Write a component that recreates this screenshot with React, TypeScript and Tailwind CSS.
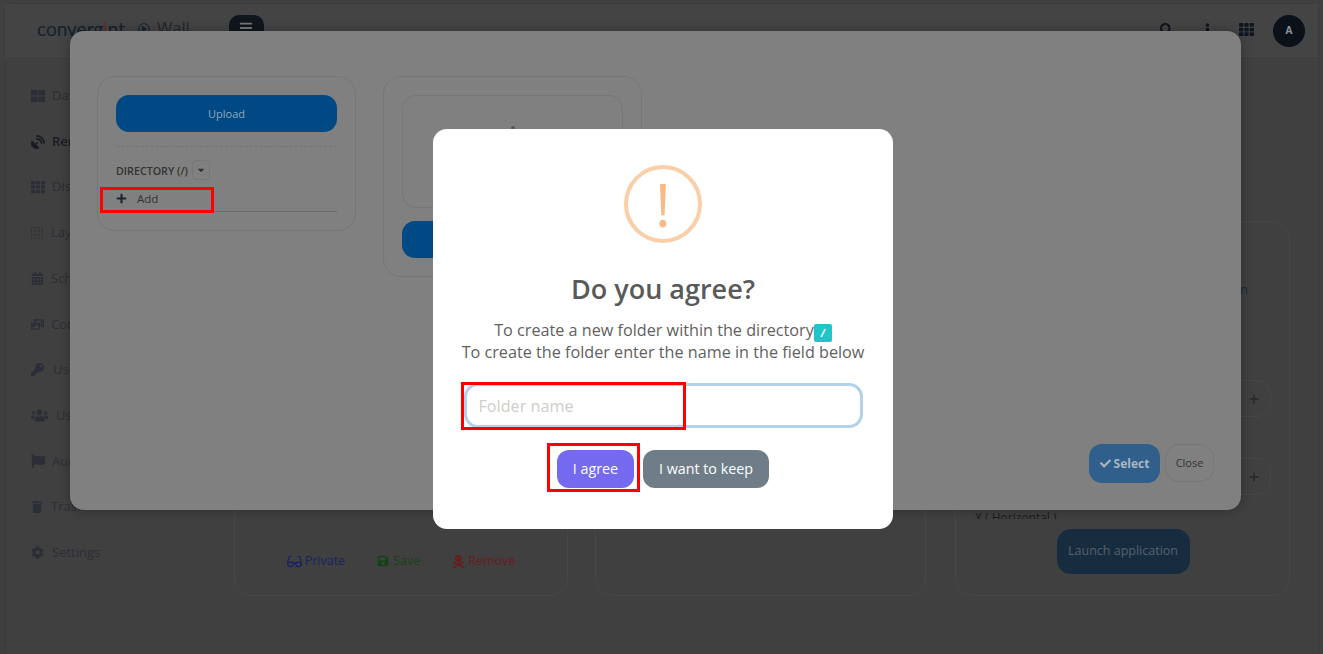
import {
  FaBars,
  FaCalendarAlt,
  FaCaretDown,
  FaCheck,
  FaCog,
  FaEllipsisV,
  FaFlag,
  FaGlasses,
  FaKey,
  FaPhotoVideo,
  FaPlus,
  FaRegPlayCircle,
  FaSatelliteDish,
  FaSave,
  FaSearch,
  FaSkullCrossbones,
  FaTh,
  FaThLarge,
  FaTrash,
  FaUsers,
} from "react-icons/fa";

function DottedGrid({ size = 12 }: { size?: number }) {
  return (
    <svg width={size} height={size} viewBox="0 0 12 12" fill="none" stroke="currentColor" strokeWidth="1" aria-hidden="true">
      <rect x="0.5" y="0.5" width="11" height="11" strokeDasharray="1 1" />
      <path d="M4 0v12M8 0v12M0 4h12M0 8h12" strokeDasharray="1 1" />
    </svg>
  );
}

const sideItems = [
  { label: "Dashboard", icon: FaThLarge, size: 14, gap: "gap-[7px]" },
  { label: "Renderers", icon: FaSatelliteDish, size: 14, gap: "gap-[7px]", active: true },
  { label: "Displays", icon: FaTh, size: 14, gap: "gap-[7px]" },
  { label: "Layouts", icon: DottedGrid, size: 12, gap: "gap-[8px]" },
  { label: "Schedules", icon: FaCalendarAlt, size: 13, gap: "gap-[7px]" },
  { label: "Contents", icon: FaPhotoVideo, size: 13, gap: "gap-[7px]" },
  { label: "Users", icon: FaKey, size: 13, gap: "gap-[9px]" },
  { label: "Usergroups", icon: FaUsers, size: 17, gap: "gap-[8px]" },
  { label: "Audit", icon: FaFlag, size: 14, gap: "gap-[7px]" },
  { label: "Trash", icon: FaTrash, size: 12, gap: "gap-[8px]" },
  { label: "Settings", icon: FaCog, size: 13, gap: "gap-[8px]" },
];

function Stepper() {
  return (
    <div className="flex h-[37px] items-center justify-end rounded-[14px] border border-[#474747] pr-[11px] text-[#2b2b2b]">
      <FaPlus size={10} />
    </div>
  );
}

export default function App() {
  return (
    <div className="relative h-[654px] w-[1323px] overflow-hidden bg-[#404040] font-['Open_Sans',sans-serif]">
      {/* page under the dialogs */}
      <div className="ml-[4px] mr-[4px] mt-[3px] h-[651px] rounded-t-[10px] border-x border-t border-[#3a3a3a]">
        <header className="flex h-[53px] items-center border-b border-[#474747] bg-[#444444] pl-[32px] pr-[13px] pt-[1px]">
          <span className="mb-[4px] w-[96px] font-['Lato',sans-serif] text-[19px] leading-none text-[#14222e]">
            converg<span className="text-[#6e2a2a]">i</span>nt
          </span>
          <FaRegPlayCircle size={12} className="mb-[4px] ml-[5px] text-[#1d2530]" />
          <span className="mb-[4px] ml-[7px] text-[16.5px] text-[#23272e]">Wall</span>
          <div className="ml-[39px] flex h-[32px] w-[35px] justify-center rounded-[10px] bg-[#10161e] pt-[6px] text-[#777]">
            <FaBars size={14} />
          </div>
          <div className="ml-auto flex items-center text-[#10161e]">
            <FaSearch size={13} className="mb-[3px] mr-[28px]" />
            <FaEllipsisV size={13} className="mb-[3px] mr-[25px]" />
            <FaTh size={15} className="mb-[3px] mr-[19px]" />
            <div className="flex h-[32px] w-[32px] items-center justify-center rounded-full bg-[#0a1118] text-[10px] font-bold text-[#8b95a0]">
              A
            </div>
          </div>
        </header>
        <div className="flex">
          <aside className="w-[229px] shrink-0 pl-[26px] pt-[16px]">
            {sideItems.map((item) => (
              <div
                key={item.label}
                className={`flex h-[45.7px] items-center ${item.gap} text-[13px] ${
                  item.active ? "font-semibold text-[#181b22]" : "text-[#2b2e36]"
                }`}
              >
                <item.icon size={item.size} />
                <span>{item.label}</span>
              </div>
            ))}
          </aside>
          <main className="grid flex-1 grid-cols-[334px_333px_335px] gap-x-[27px] pt-[164px]">
            <section className="flex h-[375px] flex-col justify-end rounded-[18px] border border-[#474747] pb-[24px]">
              <div className="flex h-5 items-center justify-center gap-[32px] text-[12.5px]">
                <span className="flex items-center gap-[3px] text-[#1c2260]">
                  <FaGlasses size={15} />
                  Private
                </span>
                <span className="flex items-center gap-[4px] text-[#174217]">
                  <FaSave size={12} />
                  Save
                </span>
                <span className="flex items-center gap-[3px] text-[#6a1c1c]">
                  <FaSkullCrossbones size={13} />
                  Remove
                </span>
              </div>
            </section>
            <section className="h-[375px] w-[331px] rounded-[18px] border border-[#474747]" />
            <section className="flex h-[375px] flex-col rounded-[18px] border border-[#474747] pl-[19px] pr-[18px]">
              <p className="mt-[58px] h-5 pr-[23px] text-right text-[13px] text-[#1c2c3c]">Position</p>
              <div className="mt-[80px]">
                <Stepper />
              </div>
              <div className="mt-[41px]">
                <Stepper />
              </div>
              <p className="mt-[15px] h-[9px] overflow-hidden text-[12px] leading-[16px] text-[#1c1c1c]">X ( Horizontal )</p>
              <button className="mx-auto mt-[10px] h-[45px] w-[133px] rounded-[14px] bg-[#182c40] text-[12.5px] font-medium text-[#55606b]">
                Launch application
              </button>
            </section>
          </main>
        </div>
      </div>

      {/* file picker modal */}
      <div className="absolute left-[70px] top-[31px] flex h-[479px] w-[1171px] flex-col justify-between rounded-[14px] bg-[#808080] shadow-[0_0_12px_rgba(0,0,0,0.3)]">
        <div className="flex gap-[27px] pl-[27px] pt-[45px]">
          <div className="h-[155px] w-[259px] rounded-[18px] border border-[#767676] px-[18px] pt-[18px]">
            <div className="flex h-[37px] items-center justify-center rounded-[13px] bg-[#004985] pt-[1px] text-[11px] text-[#8fa9bd]">
              Upload
            </div>
            <div className="mt-[14px] border-t border-dashed border-[#737373]" />
            <div className="mt-[13px] flex items-center gap-[4px]">
              <span className="pt-[2px] text-[10.7px] font-semibold text-[#333]">DIRECTORY (/)</span>
              <span className="flex h-[20px] w-[18px] items-center justify-center rounded-[4px] border border-[#777] text-[#333]">
                <FaCaretDown size={10} />
              </span>
            </div>
            <div className="mt-[6px] flex h-[26px] items-center gap-[10px] border-b border-[#6c6c6c] text-[11.5px] text-[#333]">
              <FaPlus size={11} className="text-[#1b2430]" />
              Add
            </div>
          </div>
          <div className="h-[201px] w-[259px] rounded-[18px] border border-[#767676] px-[18px] pt-[18px]">
            <div className="flex h-[113px] justify-center rounded-[14px] border border-[#767676] pt-[30px]">
              <div className="h-[4px] w-[4px] rounded-full bg-[#555555]" />
            </div>
            <div className="mt-[13px] h-[37px] rounded-[13px] bg-[#004985]" />
          </div>
        </div>
        <div className="flex justify-end gap-[5px] pb-[27px] pr-[27px]">
          <button className="flex h-[39px] w-[71px] items-center justify-center gap-[3px] rounded-[13px] bg-[#2f5f8a] text-[12px] font-bold text-[#a9b6c2]">
            <FaCheck size={11} />
            Select
          </button>
          <button className="h-[38px] w-[49px] rounded-[14px] border border-[#767676] text-[11px] text-[#333]">
            Close
          </button>
        </div>
      </div>

      {/* confirm dialog */}
      <div className="absolute left-[433px] top-[129px] flex h-[400px] w-[460px] flex-col items-center rounded-[14px] bg-white pt-[36px] text-[#5f5f5f]">
        <div className="flex h-[78px] w-[78px] items-center justify-center rounded-full border-4 border-[#facea8] text-[60px] leading-none text-[#f8bb86]">
          !
        </div>
        <h2 className="mt-[30px] text-[27px] font-semibold leading-[32px] text-[#595959]">Do you agree?</h2>
        <p className="mt-[14px] text-center text-[16.2px] leading-[22px]">
          To create a new folder within the directory
          <span className="inline-flex h-[18px] w-[18px] translate-y-[1px] items-center justify-center rounded-[2px] bg-[#20c5c9] text-[10px] font-bold italic leading-none text-white">
            /
          </span>
          <br />
          To create the folder enter the name in the field below
        </p>
        <input
          placeholder="Folder name"
          className="mt-[20px] h-[45px] w-[399px] rounded-[14px] border-[3px] border-[#b3d1e8] px-[12px] text-[16.2px] outline-none placeholder:text-[#d0cdc9]"
        />
        <div className="mt-[22px] flex gap-[9px]">
          <button className="h-[38px] w-[77px] rounded-[12px] bg-[#7569f0] pb-[1px] text-[14.3px] font-medium text-white">
            I agree
          </button>
          <button className="h-[38px] w-[126px] rounded-[12px] bg-[#6e7d88] pb-[1px] text-[14.3px] font-medium text-white">
            I want to keep
          </button>
        </div>
      </div>

      {/* red annotation boxes from the manual */}
      <div className="absolute left-[100px] top-[187px] h-[26px] w-[114px] border-[3px] border-[#ff0000]" />
      <div className="absolute left-[461px] top-[382px] h-[48px] w-[225px] border-[3px] border-[#ff0000]" />
      <div className="absolute left-[547px] top-[443px] h-[49px] w-[93px] border-[3px] border-[#ff0000]" />
    </div>
  );
}
